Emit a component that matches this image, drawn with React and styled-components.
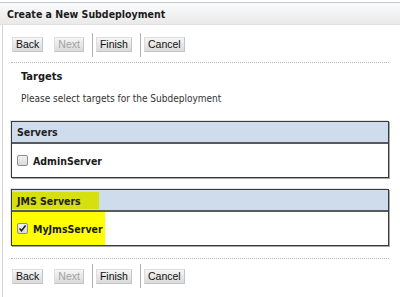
import React from "react";
import styled, { createGlobalStyle } from "styled-components";

const Global = createGlobalStyle`
  html, body { margin: 0; padding: 0; background: #fff; }
  body { font-family: "Liberation Sans", Arial, sans-serif; }
`;

const Page = styled.div`
  width: 400px;
  height: 297px;
  overflow: hidden;
  padding-top: 2px;
  box-sizing: border-box;
`;

const Header = styled.div`
  height: 21px;
  border-top: 1px solid #c3cbd1;
  border-bottom: 1px solid #e0e0e0;
  background: linear-gradient(#fbfbfb, #e9e9e9);
  display: flex;
  align-items: center;
  padding-left: 7px;
  font-family: "DejaVu Sans Condensed", "DejaVu Sans", sans-serif;
  font-weight: bold;
  font-size: 10.5px;
  color: #1c1c1c;
`;

const Body = styled.div`
  margin-left: 2px;
  border-left: 1px solid #d2d2d2;
  padding: 0 11px 0 8px;
  height: 272px;
`;

const ButtonBar = styled.div`
  display: flex;
  align-items: center;
  height: ${(p) => p.$h}px;
  padding-left: 1px;
  padding-top: ${(p) => p.$top}px;
  border-bottom: ${(p) => (p.$line ? "1px dotted #b8b8b8" : "none")};
`;

const Button = styled.div`
  height: 15px;
  box-sizing: border-box;
  padding: 0 3px;
  border: 1px solid #c4c4c4;
  border-top-color: #dedede;
  border-left-color: #dedede;
  background: linear-gradient(#f6f6f6, #dadada);
  font-family: "Liberation Sans", Arial, sans-serif;
  font-size: 10.5px;
  line-height: 13px;
  color: ${(p) => (p.$disabled ? "#a0a0a0" : "#111")};
  margin-right: ${(p) => p.$mr || 0}px;
`;

const Separator = styled.div`
  width: 1px;
  height: 24px;
  background: #b0b0b0;
  margin: 0 3px 0 8px;
`;

const Section = styled.div`
  padding: 7px 0 0 10px;
  font-family: "DejaVu Sans Condensed", "DejaVu Sans", sans-serif;
  color: #333;
`;

const SectionTitle = styled.div`
  font-weight: bold;
  font-size: 11px;
  color: #1a1a1a;
  height: 14px;
`;

const SectionText = styled.div`
  font-size: 10px;
  margin-top: 9px;
  height: 14px;
`;

const Table = styled.div`
  margin-top: ${(p) => p.$mt}px;
  border: 1px solid #3a3a3a;
  box-shadow: 1px 1px 0 #a8a8a8, -1px -1px 0 #e4e4e4;
  font-family: "DejaVu Sans Condensed", "DejaVu Sans", sans-serif;
`;

const TableHead = styled.div`
  height: 20px;
  background: #cfdcec;
  border-bottom: 2px solid #5a5a5a;
  display: flex;
  align-items: stretch;
  font-weight: bold;
  font-size: 10.5px;
  color: #222;
`;

const HeadLabel = styled.div`
  display: flex;
  align-items: center;
  padding: 0 6px 0 5px;
  margin: ${(p) => (p.$hl ? "2px 0 1px 0" : "0")};
  background: ${(p) => (p.$hl ? "#d6df10" : "transparent")};
  width: ${(p) => (p.$hl ? "76px" : "auto")};
`;

const Row = styled.div`
  height: ${(p) => p.$h}px;
  display: flex;
  align-items: stretch;
`;

const Cell = styled.div`
  display: flex;
  align-items: center;
  gap: 5px;
  padding-left: 5px;
  width: ${(p) => (p.$hl ? "88px" : "auto")};
  background: ${(p) => (p.$hl ? "#ffff00" : "transparent")};
  font-weight: bold;
  font-size: 10.5px;
  color: #1a1a1a;
`;

const Box = styled.span`
  width: 9px;
  height: 9px;
  border: 1px solid #8e8e8e;
  border-radius: 2px;
  background: linear-gradient(#f2f2f2, #d9d9d9);
  display: inline-flex;
  align-items: center;
  justify-content: center;
  margin-top: -1px;
`;

function Checkbox({ checked }) {
  return (
    <Box>
      {checked && (
        <svg width="9" height="9" viewBox="0 0 9 9">
          <path d="M1.5 4.5 L3.5 6.8 L7.6 1.6" fill="none" stroke="#222" strokeWidth="1.6" />
        </svg>
      )}
    </Box>
  );
}

function Buttons({ top, h, line }) {
  return (
    <ButtonBar $top={top} $h={h} $line={line}>
      <Button $mr={11}>Back</Button>
      <Button $disabled>Next</Button>
      <Separator />
      <Button>Finish</Button>
      <Separator />
      <Button>Cancel</Button>
    </ButtonBar>
  );
}

export default function App() {
  return (
    <Page>
      <Global />
      <Header>Create a New Subdeployment</Header>
      <Body>
        <Buttons top={2} h={35} line />
        <Section>
          <SectionTitle>Targets</SectionTitle>
          <SectionText>Please select targets for the Subdeployment</SectionText>
        </Section>
        <Table $mt={14}>
          <TableHead>
            <HeadLabel>Servers</HeadLabel>
          </TableHead>
          <Row $h={33}>
            <Cell>
              <Checkbox />
              AdminServer
            </Cell>
          </Row>
        </Table>
        <Table $mt={11}>
          <TableHead>
            <HeadLabel $hl>JMS Servers</HeadLabel>
          </TableHead>
          <Row $h={33}>
            <Cell $hl>
              <Checkbox checked />
              MyJmsServer
            </Cell>
          </Row>
        </Table>
        <ButtonBar $top={0} $h={12} $line />
        <Buttons top={0} h={34} />
      </Body>
    </Page>
  );
}
